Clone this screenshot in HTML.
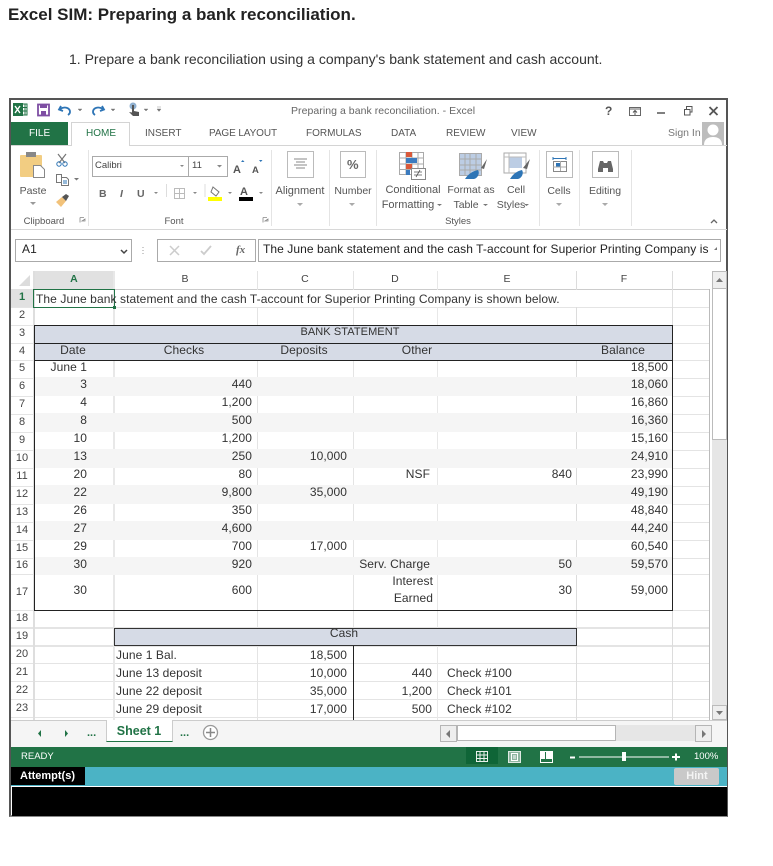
<!DOCTYPE html>
<html><head><meta charset="utf-8"><style>
html,body{margin:0;padding:0;background:#fff}
body{position:relative;width:773px;height:866px;overflow:hidden;font-family:"Liberation Sans",sans-serif;color:#333}
b.x,i,u{position:absolute;display:block;text-decoration:none;font-style:normal;font-weight:normal}
i{white-space:nowrap;font-size:12px;line-height:14px;letter-spacing:.08px;color:#333}
.ra{right:686px}.rb{right:521px}.rc{right:426px}.rd{right:341px}.re{right:201px}.rf{right:105px}
.cn{transform:translateX(-50%)}
.n{font-size:11px;color:#444;transform:translateX(-50%);left:22px;letter-spacing:0}
.rb10{font-size:10.5px;color:#555;letter-spacing:0}
.rb11{font-size:11px;color:#555;letter-spacing:0}
.h{font-size:10px;color:#555;letter-spacing:0;top:127px}
u{background:#e4e4e4}
</style></head><body>

<i style="left:8px;top:6px;font-size:17px;line-height:18px;font-weight:bold;color:#222;letter-spacing:0">Excel SIM: Preparing a bank reconciliation.</i>
<i style="left:69px;top:51px;font-size:14px;line-height:16px;color:#333;letter-spacing:0">1. Prepare a bank reconciliation using a company's bank statement and cash account.</i>

<!-- window -->
<u style="left:9px;top:98px;width:719px;height:719px;background:#fff;border:1px solid #555;border-width:2px 2px 2px 2px;box-sizing:border-box;border-bottom-color:#888"></u>

<!-- tabs -->
<u style="left:11px;top:122px;width:57px;height:23px;background:#217346"></u>
<i style="left:29px;top:127px;font-size:10px;color:#fff;letter-spacing:0">FILE</i>
<u style="left:11px;top:145px;width:716px;height:1px;background:#d4d4d4"></u>
<u style="left:71px;top:122px;width:59px;height:24px;background:#fff;border:1px solid #d4d4d4;border-bottom:0;box-sizing:border-box"></u>
<i class="h" style="left:86px;color:#217346">HOME</i>
<i class="h" style="left:145px">INSERT</i>
<i class="h" style="left:209px;letter-spacing:-.1px">PAGE LAYOUT</i>
<i class="h" style="left:306px">FORMULAS</i>
<i class="h" style="left:391px">DATA</i>
<i class="h" style="left:446px">REVIEW</i>
<i class="h" style="left:511px">VIEW</i>
<i style="left:291px;top:104px;font-size:10.5px;color:#666;letter-spacing:.05px">Preparing a bank reconciliation. - Excel</i>
<i style="left:668px;top:126px;font-size:10.5px;color:#777;letter-spacing:0">Sign In</i>

<!-- ribbon boxes -->
<u style="left:92px;top:156px;width:97px;height:21px;background:#fff;border:1px solid #aaa;box-sizing:border-box"></u>
<u style="left:188px;top:156px;width:40px;height:21px;background:#fff;border:1px solid #aaa;box-sizing:border-box"></u>
<i style="left:95px;top:159px;font-size:9.5px;color:#444;letter-spacing:0">Calibri</i>
<i style="left:192px;top:159px;font-size:9.5px;color:#444;letter-spacing:0">11</i>
<u style="left:287px;top:151px;width:27px;height:27px;background:#fff;border:1px solid #bbb;box-sizing:border-box"></u>
<u style="left:340px;top:151px;width:26px;height:27px;background:#fff;border:1px solid #bbb;box-sizing:border-box"></u>
<u style="left:546px;top:151px;width:27px;height:27px;background:#fff;border:1px solid #bbb;box-sizing:border-box"></u>
<u style="left:592px;top:151px;width:27px;height:27px;background:#fff;border:1px solid #bbb;box-sizing:border-box"></u>
<i style="left:347px;top:158px;font-size:13px;font-weight:bold;color:#666;letter-spacing:0">%</i>
<i style="left:99px;top:187px;font-size:10.5px;font-weight:bold;color:#666">B</i>
<i style="left:120px;top:187px;font-size:10.5px;font-weight:bold;font-style:italic;color:#666">I</i>
<i style="left:137px;top:187px;font-size:10.5px;font-weight:bold;color:#666">U</i>
<i class="rb10 cn" style="left:33px;top:184px">Paste</i>
<i class="rb11 cn" style="left:300px;top:184px">Alignment</i>
<i class="rb10 cn" style="left:353px;top:184px">Number</i>
<i class="rb11 cn" style="left:413px;top:183px">Conditional</i>
<i class="rb11 cn" style="left:408px;top:198px">Formatting</i>
<i class="rb10 cn" style="left:471px;top:183px">Format as</i>
<i class="rb10 cn" style="left:466px;top:198px">Table</i>
<i class="rb10 cn" style="left:516px;top:183px">Cell</i>
<i class="rb10 cn" style="left:511px;top:198px">Styles</i>
<i class="rb10 cn" style="left:559px;top:184px">Cells</i>
<i class="rb10 cn" style="left:605px;top:184px">Editing</i>
<i class="rb10 cn" style="left:44px;top:215px;font-size:9.5px">Clipboard</i>
<i class="rb10 cn" style="left:174px;top:215px;font-size:9.5px">Font</i>
<i class="rb10 cn" style="left:458px;top:215px;font-size:9.5px">Styles</i>
<u style="left:88px;top:150px;width:1px;height:76px"></u>
<u style="left:271px;top:150px;width:1px;height:76px"></u>
<u style="left:329px;top:150px;width:1px;height:76px"></u>
<u style="left:376px;top:150px;width:1px;height:76px"></u>
<u style="left:539px;top:150px;width:1px;height:76px"></u>
<u style="left:579px;top:150px;width:1px;height:76px"></u>
<u style="left:631px;top:150px;width:1px;height:76px"></u>
<u style="left:11px;top:229px;width:716px;height:1px;background:#d8d8d8"></u>

<!-- formula bar -->
<u style="left:15px;top:239px;width:117px;height:23px;background:#fff;border:1px solid #aaa;box-sizing:border-box"></u>
<u style="left:157px;top:239px;width:99px;height:23px;background:#fff;border:1px solid #aaa;box-sizing:border-box"></u>
<u style="left:258px;top:239px;width:463px;height:23px;background:#fff;border:1px solid #aaa;box-sizing:border-box"></u>
<i style="left:22px;top:242px;color:#222">A1</i>
<i style="left:263px;top:242px;color:#222;letter-spacing:.07px">The June bank statement and the cash T-account for Superior Printing Company is</i>
<i style="left:236px;top:243px;font-family:'Liberation Serif',serif;font-style:italic;font-weight:bold;font-size:11px;color:#666;letter-spacing:0">fx</i>

<!-- grid backgrounds -->
<u style="left:11px;top:271px;width:23px;height:449px;background:#fff"></u>
<u style="left:34px;top:271px;width:80px;height:18px;background:#e1e1e1"></u>
<u style="left:11px;top:289px;width:23px;height:18px;background:#e1e1e1"></u>

<!-- horizontal gridlines -->
<u style="left:34px;top:289px;width:675px;height:1px;background:#ccc"></u>
<u style="left:11px;top:307px;width:698px;height:1px"></u>
<u style="left:11px;top:325px;width:698px;height:1px"></u>
<u style="left:11px;top:343px;width:698px;height:1px"></u>
<u style="left:11px;top:360px;width:698px;height:1px"></u>
<u style="left:672px;top:378px;width:37px;height:1px"></u>
<u style="left:672px;top:396px;width:37px;height:1px"></u>
<u style="left:672px;top:414px;width:37px;height:1px"></u>
<u style="left:672px;top:432px;width:37px;height:1px"></u>
<u style="left:672px;top:450px;width:37px;height:1px"></u>
<u style="left:672px;top:468px;width:37px;height:1px"></u>
<u style="left:672px;top:486px;width:37px;height:1px"></u>
<u style="left:672px;top:504px;width:37px;height:1px"></u>
<u style="left:672px;top:522px;width:37px;height:1px"></u>
<u style="left:672px;top:540px;width:37px;height:1px"></u>
<u style="left:672px;top:558px;width:37px;height:1px"></u>
<u style="left:672px;top:574px;width:37px;height:1px"></u>
<u style="left:11px;top:378px;width:23px;height:1px"></u>
<u style="left:11px;top:396px;width:23px;height:1px"></u>
<u style="left:11px;top:414px;width:23px;height:1px"></u>
<u style="left:11px;top:432px;width:23px;height:1px"></u>
<u style="left:11px;top:450px;width:23px;height:1px"></u>
<u style="left:11px;top:468px;width:23px;height:1px"></u>
<u style="left:11px;top:486px;width:23px;height:1px"></u>
<u style="left:11px;top:504px;width:23px;height:1px"></u>
<u style="left:11px;top:522px;width:23px;height:1px"></u>
<u style="left:11px;top:540px;width:23px;height:1px"></u>
<u style="left:11px;top:558px;width:23px;height:1px"></u>
<u style="left:11px;top:574px;width:23px;height:1px"></u>
<u style="left:11px;top:610px;width:698px;height:1px"></u>
<u style="left:11px;top:627px;width:698px;height:2px"></u>
<u style="left:11px;top:645px;width:698px;height:2px"></u>
<u style="left:11px;top:663px;width:698px;height:1px"></u>
<u style="left:11px;top:681px;width:698px;height:1px"></u>
<u style="left:11px;top:699px;width:698px;height:1px"></u>
<u style="left:11px;top:717px;width:698px;height:1px"></u>

<!-- vertical gridlines -->
<u style="left:33px;top:271px;width:2px;height:449px;background:#dedede"></u>
<u style="left:113px;top:271px;width:2px;height:449px;background:#e8e8e8"></u>
<u style="left:257px;top:271px;width:1px;height:449px;background:#e4e4e4"></u>
<u style="left:353px;top:271px;width:1px;height:449px;background:#e4e4e4"></u>
<u style="left:437px;top:271px;width:1px;height:449px;background:#e8e8e8"></u>
<u style="left:576px;top:271px;width:1px;height:449px;background:#dcdcdc"></u>
<u style="left:672px;top:271px;width:1px;height:449px;background:#dcdcdc"></u>
<u style="left:709px;top:289px;width:1px;height:431px;background:#bbb"></u>

<!-- bands sit above vertical gridlines -->
<u style="left:34px;top:377px;width:638px;height:19px;background:#f5f5f5"></u>
<u style="left:34px;top:413px;width:638px;height:19px;background:#f5f5f5"></u>
<u style="left:34px;top:449px;width:638px;height:19px;background:#f5f5f5"></u>
<u style="left:34px;top:485px;width:638px;height:19px;background:#f5f5f5"></u>
<u style="left:34px;top:521px;width:638px;height:19px;background:#f5f5f5"></u>
<u style="left:34px;top:557px;width:638px;height:18px;background:#f5f5f5"></u>
<u style="left:34px;top:326px;width:638px;height:34px;background:#d6dbe6"></u>

<!-- merged row 1 -->
<u style="left:115px;top:290px;width:594px;height:17px;background:#fff"></u>
<u style="left:672px;top:290px;width:1px;height:17px;background:#e0e0e0"></u>

<!-- column heads -->
<i class="cn" style="left:74px;top:272px;font-size:10.5px;font-weight:bold;color:#217346">A</i>
<i class="cn" style="left:185px;top:272px;font-size:10.5px;color:#444">B</i>
<i class="cn" style="left:305px;top:272px;font-size:10.5px;color:#444">C</i>
<i class="cn" style="left:395px;top:272px;font-size:10.5px;color:#444">D</i>
<i class="cn" style="left:507px;top:272px;font-size:10.5px;color:#444">E</i>
<i class="cn" style="left:624px;top:272px;font-size:10.5px;color:#444">F</i>

<!-- row heads -->
<i class="n" style="top:290px;font-weight:bold;color:#217346">1</i>
<i class="n" style="top:308px">2</i><i class="n" style="top:326px">3</i><i class="n" style="top:344px">4</i>
<i class="n" style="top:361px">5</i><i class="n" style="top:379px">6</i><i class="n" style="top:397px">7</i>
<i class="n" style="top:415px">8</i><i class="n" style="top:433px">9</i><i class="n" style="top:451px">10</i>
<i class="n" style="top:469px">11</i><i class="n" style="top:487px">12</i><i class="n" style="top:505px">13</i>
<i class="n" style="top:523px">14</i><i class="n" style="top:541px">15</i><i class="n" style="top:558px">16</i>
<i class="n" style="top:585px">17</i><i class="n" style="top:611px">18</i><i class="n" style="top:629px">19</i>
<i class="n" style="top:647px">20</i><i class="n" style="top:665px">21</i><i class="n" style="top:683px">22</i>
<i class="n" style="top:701px">23</i>

<!-- selected cell + row1 text -->
<u style="left:33px;top:289px;width:82px;height:19px;background:none;border:1px solid #217346;border-width:1px;box-sizing:border-box"></u>
<u style="left:113px;top:306px;width:3px;height:3px;background:#217346"></u>
<i style="left:36px;top:292px;color:#333;letter-spacing:.09px">The June bank statement and the cash T-account for Superior Printing Company is shown below.</i>

<!-- bank statement box -->
<u style="left:34px;top:325px;width:639px;height:286px;background:none;border:1px solid #222;box-sizing:border-box"></u>
<u style="left:34px;top:343px;width:639px;height:1px;background:#222"></u>
<u style="left:34px;top:360px;width:639px;height:1px;background:#222"></u>
<i class="cn" style="left:350px;top:325px;font-size:11px">BANK STATEMENT</i>
<i class="cn" style="left:73px;top:343px">Date</i>
<i class="cn" style="left:184px;top:343px">Checks</i>
<i class="cn" style="left:304px;top:343px">Deposits</i>
<i class="cn" style="left:417px;top:343px">Other</i>
<i class="cn" style="left:623px;top:343px">Balance</i>

<i class="ra" style="top:360px">June 1</i><i class="rf" style="top:360px">18,500</i>
<i class="ra" style="top:377px">3</i><i class="rb" style="top:377px">440</i><i class="rf" style="top:377px">18,060</i>
<i class="ra" style="top:395px">4</i><i class="rb" style="top:395px">1,200</i><i class="rf" style="top:395px">16,860</i>
<i class="ra" style="top:413px">8</i><i class="rb" style="top:413px">500</i><i class="rf" style="top:413px">16,360</i>
<i class="ra" style="top:431px">10</i><i class="rb" style="top:431px">1,200</i><i class="rf" style="top:431px">15,160</i>
<i class="ra" style="top:449px">13</i><i class="rb" style="top:449px">250</i><i class="rc" style="top:449px">10,000</i><i class="rf" style="top:449px">24,910</i>
<i class="ra" style="top:467px">20</i><i class="rb" style="top:467px">80</i><i class="rd" style="top:467px;right:343px">NSF</i><i class="re" style="top:467px">840</i><i class="rf" style="top:467px">23,990</i>
<i class="ra" style="top:485px">22</i><i class="rb" style="top:485px">9,800</i><i class="rc" style="top:485px">35,000</i><i class="rf" style="top:485px">49,190</i>
<i class="ra" style="top:503px">26</i><i class="rb" style="top:503px">350</i><i class="rf" style="top:503px">48,840</i>
<i class="ra" style="top:521px">27</i><i class="rb" style="top:521px">4,600</i><i class="rf" style="top:521px">44,240</i>
<i class="ra" style="top:539px">29</i><i class="rb" style="top:539px">700</i><i class="rc" style="top:539px">17,000</i><i class="rf" style="top:539px">60,540</i>
<i class="ra" style="top:557px">30</i><i class="rb" style="top:557px">920</i><i class="rd" style="top:557px;right:343px">Serv. Charge</i><i class="re" style="top:557px">50</i><i class="rf" style="top:557px">59,570</i>
<i class="ra" style="top:583px">30</i><i class="rb" style="top:583px">600</i><i class="rd" style="top:574px;right:340px">Interest</i><i class="rd" style="top:591px;right:340px">Earned</i><i class="re" style="top:583px">30</i><i class="rf" style="top:583px">59,000</i>

<!-- cash -->
<u style="left:114px;top:628px;width:463px;height:18px;background:#d6dbe6;border:1px solid #333;box-sizing:border-box"></u>
<i class="cn" style="left:344px;top:626px">Cash</i>
<u style="left:353px;top:646px;width:1px;height:74px;background:#222"></u>
<i style="left:116px;top:648px">June 1 Bal.</i><i class="rc" style="top:648px">18,500</i>
<i style="left:116px;top:666px">June 13 deposit</i><i class="rc" style="top:666px">10,000</i><i class="rd" style="top:666px;right:341px">440</i><i style="left:447px;top:666px">Check #100</i>
<i style="left:116px;top:684px">June 22 deposit</i><i class="rc" style="top:684px">35,000</i><i class="rd" style="top:684px;right:341px">1,200</i><i style="left:447px;top:684px">Check #101</i>
<i style="left:116px;top:702px">June 29 deposit</i><i class="rc" style="top:702px">17,000</i><i class="rd" style="top:702px;right:341px">500</i><i style="left:447px;top:702px">Check #102</i>

<!-- vertical scrollbar -->
<u style="left:712px;top:271px;width:15px;height:449px;background:#e6e6e6"></u>
<u style="left:712px;top:271px;width:15px;height:18px;background:#eee;border:1px solid #bbb;box-sizing:border-box"></u>
<u style="left:712px;top:288px;width:15px;height:152px;background:#fff;border:1px solid #bbb;box-sizing:border-box"></u>
<u style="left:712px;top:705px;width:15px;height:15px;background:#eee;border:1px solid #bbb;box-sizing:border-box"></u>

<!-- sheet bar -->
<u style="left:11px;top:720px;width:716px;height:27px;background:#f5f5f5;border-top:1px solid #ccc;box-sizing:border-box"></u>
<u style="left:106px;top:720px;width:67px;height:22px;background:#fff;border:1px solid #ccc;border-top:0;border-bottom:1px solid #217346;box-sizing:border-box"></u>
<i class="cn" style="left:139px;top:724px;font-weight:bold;font-size:12.5px;color:#217346;letter-spacing:0">Sheet 1</i>
<i style="left:87px;top:726px;font-weight:bold;font-size:11px;color:#217346;letter-spacing:0">...</i>
<i style="left:180px;top:726px;font-weight:bold;font-size:11px;color:#217346;letter-spacing:0">...</i>
<u style="left:440px;top:725px;width:272px;height:16px;background:#e6e6e6"></u>
<u style="left:440px;top:725px;width:17px;height:17px;background:#eee;border:1px solid #b5b5b5;box-sizing:border-box"></u>
<u style="left:457px;top:725px;width:159px;height:16px;background:#fff;border:1px solid #b5b5b5;box-sizing:border-box"></u>
<u style="left:695px;top:725px;width:17px;height:17px;background:#eee;border:1px solid #b5b5b5;box-sizing:border-box"></u>

<!-- status bars -->
<u style="left:11px;top:747px;width:716px;height:20px;background:#217346"></u>
<i style="left:21px;top:750px;font-size:9.5px;color:#fff;letter-spacing:0">READY</i>
<u style="left:466px;top:747px;width:32px;height:17px;background:#0f6537"></u>
<i style="left:694px;top:750px;font-size:9.5px;color:#fff;letter-spacing:0">100%</i>
<u style="left:11px;top:767px;width:716px;height:19px;background:#4bb3c5"></u>
<u style="left:11px;top:767px;width:74px;height:18px;background:#000"></u>
<i style="left:20px;top:769px;font-size:11px;font-weight:bold;color:#fff;letter-spacing:0">Attempt(s)</i>
<u style="left:674px;top:768px;width:45px;height:17px;background:#c9c9c9;border-radius:2px"></u>
<i class="cn" style="left:697px;top:769px;font-size:11px;font-weight:bold;color:#f4f4f4;letter-spacing:0">Hint</i>
<u style="left:11px;top:786px;width:716px;height:1px;background:#fff"></u>
<u style="left:12px;top:787px;width:715px;height:29px;background:#000"></u>

<!-- icons -->
<svg width="773" height="866" viewBox="0 0 773 866" style="position:absolute;left:0;top:0">
<!-- excel logo -->
<rect x="13" y="103" width="10" height="13" fill="#217346"/><path d="M15 106l5 7M20 106l-5 7" stroke="#fff" stroke-width="1.4"/>
<path d="M23 104h4v11h-4M23 107.500h4M23 111h4M25 104v11" stroke="#217346" fill="none"/>
<!-- save -->
<rect x="38" y="104.500" width="11" height="11" fill="none" stroke="#7e4ea3" stroke-width="1.800"/><rect x="40" y="104" width="7" height="4" fill="#7e4ea3"/><rect x="41" y="111" width="5" height="4" fill="#7e4ea3"/>
<!-- undo/redo -->
<path d="M61 106l-2 3.500 4 1.500M60 109c5-3 10-1 10 3 0 1-.5 2-2 3" fill="none" stroke="#2e75b6" stroke-width="1.800"/>
<path d="M102 106l2 3.500-4 1.500M103 109c-5-3-10-1-10 3 0 1 .5 2 2 3" fill="none" stroke="#2e75b6" stroke-width="1.800"/>
<path d="M78 109h4l-2 2zM111 109h4l-2 2zM144 109h4l-2 2zM157 107h4M157 109h4l-2 2.500z" fill="#777" stroke="#777" stroke-width=".4"/>
<!-- touch -->
<circle cx="133" cy="106" r="3.500" fill="#8fb0d0"/><path d="M132 105h2v6l5 1v4h-6l-4-4 3 .5z" fill="#555"/>
<!-- window controls -->
<text x="605" y="115" font-family="Liberation Sans" font-size="12" font-weight="bold" fill="#555">?</text>
<rect x="629.500" y="107.500" width="11" height="8" fill="none" stroke="#666"/><path d="M630 109h10" stroke="#666"/><path d="M635 115v-4M633 112.500l2-2 2 2" stroke="#555" fill="none"/>
<path d="M657 113h8" stroke="#555" stroke-width="1.500"/>
<path d="M684.500 109.500h5.500v5.500h-5.500zM686.500 109v-2.500h5.500v5.500h-2" fill="none" stroke="#555"/>
<path d="M709.500 107l8 8M717.500 107l-8 8" stroke="#555" stroke-width="1.800"/>
<!-- avatar -->
<rect x="702" y="122" width="22" height="23" fill="#bdbdbd"/><circle cx="713" cy="130" r="5.500" fill="#fff"/><path d="M704 145c0-6 4-8 9-8s9 2 9 8z" fill="#fff"/>
<!-- clipboard -->
<rect x="20" y="155" width="22" height="22" rx="1" fill="#f2cd82"/><rect x="26" y="152" width="10" height="5" fill="#888"/><path d="M33.500 165.500h7l4 4v8h-11z" fill="#fff" stroke="#888"/>
<path d="M30 202h6l-3 3z" fill="#999"/>
<!-- scissors -->
<path d="M58 154l7 9M66 154l-7 9" stroke="#777" fill="none" stroke-width="1.200"/><circle cx="59" cy="164" r="2.200" fill="none" stroke="#2e75b6"/><circle cx="65" cy="164" r="2.200" fill="none" stroke="#2e75b6"/>
<!-- copy -->
<path d="M56.500 174.500h5v8h-5zM61.500 177.500h5l2 2v6h-7z" fill="#fff" stroke="#777"/><path d="M63 181h4M63 183h4" stroke="#2e75b6"/>
<path d="M74 178h5l-2.500 2.500z" fill="#777"/>
<!-- painter -->
<path d="M56 202l6-5 4 4-5 6z" fill="#f2c27a"/><path d="M62 197l4-3 3 2-3 5z" fill="#555"/>
<!-- dialog launchers -->
<path d="M80 217.500h4M80 217.500v5M82 221h3v-2z" stroke="#888" fill="none" stroke-width=".8"/><path d="M263 217.500h4M263 217.500v5M265 221h3v-2z" stroke="#888" fill="none" stroke-width=".8"/>
<!-- font controls -->
<path d="M180 165h4l-2 2zM217 165h5l-2.500 2.500z" fill="#888"/>
<text x="233" y="173" font-family="Liberation Sans" font-size="11" font-weight="bold" fill="#555">A</text><path d="M241 162h3.500l-1.750 -2z" fill="#2e75b6"/>
<text x="252" y="173" font-family="Liberation Sans" font-size="9.500" font-weight="bold" fill="#555">A</text><path d="M259 160h3.500l-1.750 2z" fill="#2e75b6"/>
<path d="M154 192h4l-2 2zM193 192h4l-2 2zM228 192h4l-2 2zM259 192h4l-2 2z" fill="#888"/>
<path d="M166.500 184v13" stroke="#ddd"/><rect x="174.500" y="188.500" width="10" height="10" fill="none" stroke="#bbb"/><path d="M179.500 188v11M174 193.500h11" stroke="#bbb"/>
<path d="M205 184v13" stroke="#ddd"/>
<path d="M213 187l6 5-3 4-5-4z" fill="#fff" stroke="#777"/><rect x="208" y="197" width="14" height="4" fill="#ffff00"/>
<text x="240" y="195" font-family="Liberation Sans" font-size="11" font-weight="bold" fill="#555">A</text><rect x="239" y="197" width="14" height="4" fill="#000"/>
<!-- alignment -->
<path d="M294 159h13M296 162h9M294 165h13M296 168h9" stroke="#888"/>
<!-- carets -->
<path d="M297 203h6l-3 3zM349 203h6l-3 3zM556 203h6l-3 3zM602 203h6l-3 3z" fill="#aaa"/>
<path d="M437 204h5l-2.500 2zM483 204h5l-2.500 2zM524 204h5l-2.500 2z" fill="#777"/>
<path d="M711 223l3-3 3 3" fill="none" stroke="#666" stroke-width="1.300"/>
<!-- conditional formatting -->
<g fill="none" stroke="#aaa"><rect x="399.500" y="152.500" width="24" height="22"/><path d="M399 158h25M399 164h25M399 169.500h25M406 152v22M412 152v22M418 152v22"/></g>
<rect x="406" y="152" width="6" height="5" fill="#d9593a"/><rect x="406" y="158" width="11" height="5" fill="#3b7bbf"/><rect x="406" y="164" width="6" height="5" fill="#d9593a"/><rect x="406" y="170" width="4" height="5" fill="#3b7bbf"/>
<rect x="411.500" y="168.500" width="14" height="11" fill="#fff" stroke="#888"/><path d="M414 172h8M414 175h8M420 170l-4 7" stroke="#555" fill="none" stroke-width=".8"/>
<!-- format table -->
<rect x="459.500" y="153.500" width="22" height="22" fill="#bccde4" stroke="#aaa"/><path d="M459 159h22M459 165h22M459 170h22M465 153v22M470 153v22M476 153v22" stroke="#aaa" fill="none"/>
<path d="M481 168l6-9 -3 10z" fill="#666"/><path d="M465 179c3-5 8-8 13-9 2 3 0 8-4 9z" fill="#2e75b6"/>
<!-- cell styles -->
<rect x="504" y="153" width="22" height="20" fill="#fff" stroke="#aaa"/><rect x="509" y="157" width="13" height="11" fill="#bccde4"/>
<path d="M504 157h22M509 153v20" stroke="#bbb" fill="none"/>
<path d="M523 168l7-9-3 10z" fill="#666"/><path d="M510 179c3-5 7-8 12-9 2 3 0 8-4 9z" fill="#2e75b6"/>
<!-- cells -->
<rect x="553.500" y="161.500" width="13" height="10" fill="#fff" stroke="#888"/><path d="M553 158.500h13M553 157v3M566 157v3" stroke="#2e75b6"/><rect x="556" y="163" width="4" height="4" fill="#2e75b6"/><path d="M553 167h13M560.500 161v10" stroke="#aaa"/>
<!-- binoculars -->
<path d="M598 169l2-8h3l1 2h3l1-2h3l2 8v3h-5v-4h-5v4h-5z" fill="#666"/>
<!-- formula icons -->
<path d="M121 250l3 3 3-3" stroke="#444" stroke-width="1.500" fill="none"/>
<path d="M143 247v1M143 250v1M143 253v1" stroke="#999"/>
<path d="M170 246l9 9M179 246l-9 9" stroke="#ccc" stroke-width="1.500"/>
<path d="M201 251l3 3 7-8" stroke="#ccc" stroke-width="1.800" fill="none"/>
<path d="M714 250l3-3v3z" fill="#777"/>
<!-- grid corner -->
<path d="M30 275v11h-11z" fill="#dcdcdc"/>
<!-- scroll arrows -->
<path d="M716 282h7l-3.500-4zM716 711h7l-3.500 4z" fill="#777"/>
<path d="M450 730v8l-4-4zM702 730v8l4-4z" fill="#777"/>
<path d="M41 730v7l-3-3.500zM65 730v7l3-3.500z" fill="#217346"/>
<circle cx="210.500" cy="732.500" r="7" fill="#fff" stroke="#999" stroke-width="1.300"/><path d="M206 732.500h9M210.500 728v9" stroke="#888" stroke-width="1.500"/>
<!-- status icons -->
<g stroke="#e8f0ea" fill="none"><rect x="476.500" y="751.500" width="11" height="10"/><path d="M476 755h12M476 758.500h12M480 751v11M484 751v11"/></g>
<rect x="508.500" y="751.500" width="12" height="11" fill="#8fb5a0" stroke="#dfe9e3"/><path d="M511.500 753.500h6v7h-6zM513 756h3M513 758h3" stroke="#fff" fill="none"/>
<rect x="540.500" y="751.500" width="12" height="11" fill="none" stroke="#fff"/><path d="M541 752h4v7h-4zM546 752h6v7h-6z" fill="#fff"/>
<path d="M579 757h90" stroke="#fff"/>
<path d="M570 757.500h5M672 757h8M676 753.500v7" stroke="#fff" stroke-width="2" fill="none"/>
<rect x="622" y="752" width="4" height="9" fill="#fff"/>
</svg>
</body></html>
